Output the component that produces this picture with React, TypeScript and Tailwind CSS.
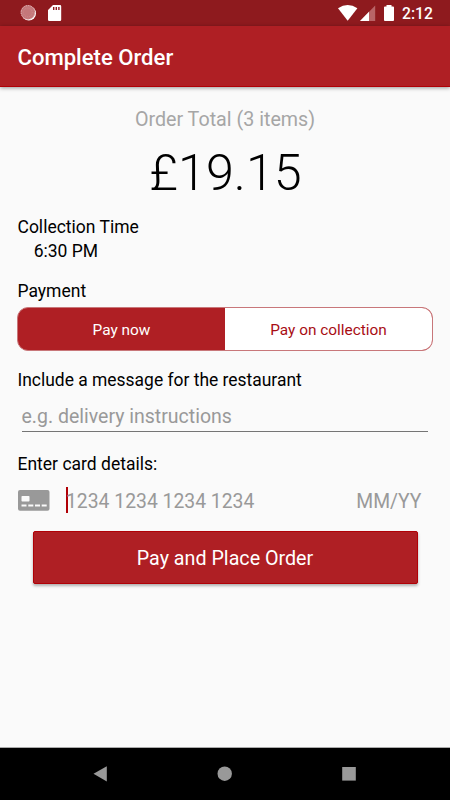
function StatusBar() {
  return (
    <div className="flex h-[26px] shrink-0 items-center justify-between bg-[#8e1a1e] text-white">
      <svg className="h-[26px] w-[80px]" viewBox="0 0 80 26">
        <circle cx="28.800" cy="13.300" r="7.200" fill="#fff" />
        <circle cx="27.900" cy="12.300" r="7.200" fill="#c4777a" />
        <circle cx="28" cy="12.500" r="6.900" fill="none" stroke="#e3bcbe" strokeWidth="1" strokeDasharray="1.2 1.3" />
        <circle cx="27.800" cy="12.400" r="4.400" fill="none" stroke="#d08e91" strokeWidth="0.800" strokeDasharray="1 1.200" />
        <path d="M53 5h7a1.200 1.200 0 0 1 1.200 1.200v13.600A1.200 1.200 0 0 1 60 21H49.200a1.200 1.200 0 0 1-1.200-1.200V10z" fill="#fff" />
        <path d="M53 7h1.400v3H53zM55.600 7H57v3h-1.400zM58.200 7h1.400v3h-1.400z" fill="#8e1a1e" />
      </svg>
      <div className="flex items-center">
        <svg className="h-[26px] w-[64px]" viewBox="336 0 64 26">
          <path d="M338 8.300Q347.700 1.500 357.400 8.300L347.700 20.800z" fill="#fff" />
          <path d="M375.200 5.500V21H360z" fill="#b96467" />
          <path d="M369 11.800V21h-9z" fill="#fff" />
          <path d="M386.500 5h5v1.500h1.600a.9.900 0 0 1 .9.900v12.700a.9.900 0 0 1-.9.900h-8.200a.9.900 0 0 1-.9-.9V7.400a.9.900 0 0 1 .9-.9h1.600z" fill="#fff" />
        </svg>
        <span className="mt-[2px] w-[50px] pl-[2px] text-[15.700px] leading-[24px] font-medium">2:12</span>
      </div>
    </div>
  );
}

function CardIcon() {
  return (
    <svg className="h-[21px] w-[32px]" viewBox="0 0 32 21">
      <rect x="0" y="0" width="31.500" height="20.700" rx="2" fill="#999" />
      <rect x="3.500" y="6" width="8" height="5.500" rx="0.800" fill="#fafafa" />
      <path d="M3.500 15.500h5M10.300 15.500h5M17 15.500h5M23.700 15.500h5" stroke="#fafafa" strokeWidth="2" />
    </svg>
  );
}

function NavBar() {
  return (
    <div className="flex h-[53px] shrink-0 justify-center border-t border-[#aaa] bg-black">
      <svg className="h-[52px] w-[450px]" viewBox="0 0 450 52" fill="#999">
        <path d="M93.500 25.800 106.800 18.300V33.600z" />
        <circle cx="224.700" cy="25.700" r="7.200" />
        <rect x="342.200" y="19" width="13.600" height="13.600" />
      </svg>
    </div>
  );
}

export default function App() {
  return (
    <div className="flex h-[800px] w-[450px] flex-col overflow-hidden bg-[#fafafa] font-['Roboto',sans-serif] whitespace-nowrap text-black">
      <StatusBar />
      <header className="flex h-[61px] shrink-0 items-center border-b border-[#b00006] bg-[#af1f24] pt-[4px] pl-[17.500px] text-[22.100px] font-medium text-white shadow-[0_1px_4px_rgba(0,0,0,0.4)]">
        Complete Order
      </header>

      <main className="flex flex-1 flex-col px-[17px] pt-[19px]">
        <div className="text-center text-[19.700px] leading-[28px] text-[#a6a6a6]">Order Total (3 items)</div>
        <div className="mt-[9px] pl-px text-center text-[50.300px] leading-[60px] font-light">£19.15</div>

        <div className="mt-[12px] pl-[0.500px] text-[17.500px] leading-[24px]">Collection Time</div>
        <div className="pl-[16.700px] text-[17.500px] leading-[24px]">6:30 PM</div>

        <div className="mt-[16px] pl-[0.500px] text-[17.500px] leading-[24px]">Payment</div>
        <div className="mt-[4px] flex h-[44px] overflow-hidden rounded-[11px] border border-[#c8777a] bg-[#af1f24] text-[15.400px]">
          <button className="flex flex-1 items-center justify-center pt-[3px] text-white">Pay now</button>
          <button className="flex flex-1 items-center justify-center bg-white pt-[3px] text-[#a80d14]">Pay on collection</button>
        </div>

        <div className="mt-[17px] pl-[0.500px] text-[17.450px] leading-[24px]">Include a message for the restaurant</div>
        <div className="mr-[5px] ml-[4.500px] mt-[9px] h-[31px] border-b border-[#757575] text-[19.500px] leading-[32px] text-[#999]">e.g. delivery instructions</div>

        <div className="mt-[20px] pl-[0.500px] text-[17.500px] leading-[24px]">Enter card details:</div>
        <div className="mt-[11px] flex h-[26px] items-center pl-[0.500px] text-[19.350px] text-[#999]">
          <CardIcon />
          <span className="ml-[16px] h-[26px] w-[2px] bg-[#b00006]" />
          <span className="-ml-[1.500px] pt-[2px]">1234 1234 1234 1234</span>
          <span className="mr-[11.500px] ml-auto pt-[2px]">MM/YY</span>
        </div>

        <button className="mx-[15.500px] mt-[18px] flex h-[53px] shrink-0 items-center justify-center rounded-[2px] border border-[#b00006] bg-[#af1f24] pt-[2px] text-[19.700px] text-white shadow-[0_2px_3px_rgba(0,0,0,0.3)]">
          Pay and Place Order
        </button>
      </main>
      <NavBar />
    </div>
  );
}
